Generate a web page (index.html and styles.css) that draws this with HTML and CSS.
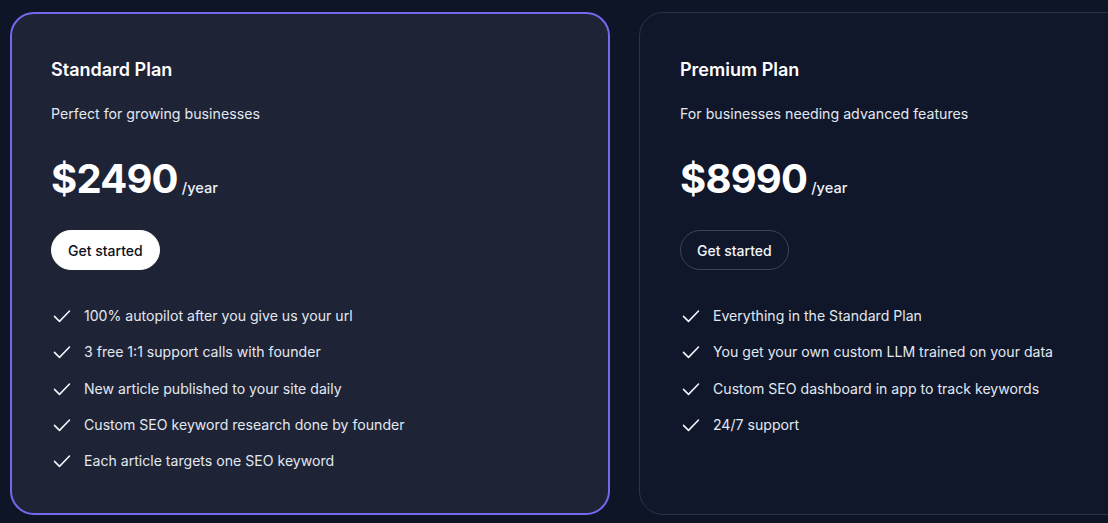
FILE: index.html
```html
<!DOCTYPE html>
<html lang="en">
<head>
<meta charset="utf-8">
<title>Pricing</title>
<link rel="stylesheet" href="styles.css">
</head>
<body>
<div class="plans">
  <section class="card card-featured">
    <h2 class="plan-name">Standard Plan</h2>
    <p class="plan-desc">Perfect for growing businesses</p>
    <div class="price"><span class="amount">$2490</span><span class="period">/year</span></div>
    <button class="btn btn-light">Get started</button>
    <ul class="features">
      <li><svg class="check" viewBox="0 0 24 24"><polyline points="3 12.5 9 18.5 21 6"/></svg>100% autopilot after you give us your url</li>
      <li><svg class="check" viewBox="0 0 24 24"><polyline points="3 12.5 9 18.5 21 6"/></svg>3 free 1:1 support calls with founder</li>
      <li><svg class="check" viewBox="0 0 24 24"><polyline points="3 12.5 9 18.5 21 6"/></svg>New article published to your site daily</li>
      <li><svg class="check" viewBox="0 0 24 24"><polyline points="3 12.5 9 18.5 21 6"/></svg>Custom SEO keyword research done by founder</li>
      <li><svg class="check" viewBox="0 0 24 24"><polyline points="3 12.5 9 18.5 21 6"/></svg>Each article targets one SEO keyword</li>
    </ul>
  </section>
  <section class="card">
    <h2 class="plan-name">Premium Plan</h2>
    <p class="plan-desc">For businesses needing advanced features</p>
    <div class="price"><span class="amount">$8990</span><span class="period">/year</span></div>
    <button class="btn btn-outline">Get started</button>
    <ul class="features">
      <li><svg class="check" viewBox="0 0 24 24"><polyline points="3 12.5 9 18.5 21 6"/></svg>Everything in the Standard Plan</li>
      <li><svg class="check" viewBox="0 0 24 24"><polyline points="3 12.5 9 18.5 21 6"/></svg>You get your own custom LLM trained on your data</li>
      <li><svg class="check" viewBox="0 0 24 24"><polyline points="3 12.5 9 18.5 21 6"/></svg>Custom SEO dashboard in app to track keywords</li>
      <li><svg class="check" viewBox="0 0 24 24"><polyline points="3 12.5 9 18.5 21 6"/></svg>24/7 support</li>
    </ul>
  </section>
</div>
</body>
</html>
```

FILE: styles.css
```css
html, body {
  margin: 0;
  padding: 0;
}
body {
  background: #0e1526;
  font-family: Inter, "Noto Sans", sans-serif;
  color: #f1f5f9;
  overflow: hidden;
  width: 1108px;
  height: 523px;
}
.plans {
  display: flex;
  gap: 29px;
  padding: 12px 0 0 10px;
  width: 1900px;
}
.card {
  box-sizing: border-box;
  width: 600px;
  flex: none;
  border: 1px solid #2b3447;
  border-radius: 24px;
  padding: 43px 40px 40px;
  background: #10172a;
}
.card-featured {
  border: 2px solid #7468ef;
  background: #1e2336;
  padding: 42px 39px 40px;
}
.plan-name {
  margin: 0;
  font-size: 18px;
  line-height: 28px;
  font-weight: 600;
  color: #ffffff;
}
.plan-desc {
  margin: 18px 0 0;
  font-size: 14.2px;
  line-height: 24px;
  color: #e2e8f0;
}
.price {
  margin-top: 29px;
  display: flex;
  align-items: baseline;
  gap: 4px;
  line-height: 48px;
}
.amount {
  font-size: 40px;
  font-weight: 700;
  color: #ffffff;
  letter-spacing: -0.8px;
}
.period {
  font-size: 14.6px;
  font-weight: 500;
  color: #eef2f7;
}
.btn {
  margin-top: 18px;
  height: 40px;
  padding: 0 16px;
  border-radius: 999px;
  font-family: inherit;
  font-size: 14px;
  font-weight: 500;
  cursor: pointer;
}
.btn-light {
  background: #ffffff;
  color: #0b1020;
  border: 1px solid #ffffff;
}
.btn-outline {
  background: transparent;
  color: #f1f5f9;
  border: 1px solid #3a4458;
}
.features {
  list-style: none;
  margin: 34px 0 0;
  padding: 0;
  display: flex;
  flex-direction: column;
  gap: 12.25px;
}
.features li {
  display: flex;
  align-items: center;
  gap: 12px;
  font-size: 14.1px;
  line-height: 24px;
  color: #e2e8f0;
}
.check {
  width: 20px;
  height: 20px;
  flex: none;
  margin-left: 1px;
  fill: none;
  stroke: #f1f5f9;
  stroke-width: 1.9;
  stroke-linecap: round;
  stroke-linejoin: round;
}
```
